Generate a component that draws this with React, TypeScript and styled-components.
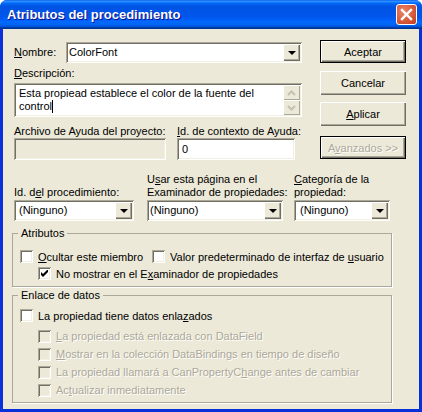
import React from 'react';
import styled, { createGlobalStyle } from 'styled-components';

// ===== Global =====
const GlobalStyle = createGlobalStyle`
  html, body {
    margin: 0;
    padding: 0;
    background: #fff;
  }
`;

const uiFont = `"Liberation Sans", Arial, sans-serif`;
const sunken = `inset 1px 1px 0 #aca899, inset -1px -1px 0 #fff, inset 2px 2px 0 #716f64, inset -2px -2px 0 #f1efe2`;
const raised = `inset 1px 1px 0 #fff, inset -1px -1px 0 #716f64, inset -2px -2px 0 #aca899`;

// ===== Window frame =====
const Window = styled.div`
  width: 422px;
  height: 412px;
  box-sizing: border-box;
  display: flex;
  flex-direction: column;
  background: #0831d9;
  border-radius: 7px 7px 0 0;
  overflow: hidden;
  font-family: ${uiFont};
  font-size: 11px;
  color: #000;
`;
const TitleBar = styled.header`
  height: 29px;
  flex: none;
  display: flex;
  align-items: center;
  justify-content: space-between;
  padding: 0 5px 0 7px;
  background: linear-gradient(180deg, #0058ee 0%, #3593ff 4%, #288eff 6%, #127dff 8%, #036ffc 10%, #0262ee 14%, #0057e5 20%, #0054e3 24%, #0055eb 56%, #005bf5 66%, #026afe 76%, #0062ef 86%, #0052d6 92%, #0040ab 94%, #003092 100%);
`;
const Title = styled.h1`
  margin: 0;
  font-family: ${uiFont};
  font-size: 13px;
  font-weight: 700;
  color: #fff;
  text-shadow: 1px 1px 0 #0f1089;
  white-space: nowrap;
`;
const CloseButton = styled.div`
  width: 21px;
  height: 21px;
  box-sizing: border-box;
  border: 1px solid #fff;
  border-radius: 3px;
  background: radial-gradient(circle at 35% 35%, #e9866b 0%, #d9603f 50%, #c0391c 100%);
  display: flex;
  align-items: center;
  justify-content: center;
`;
const Client = styled.main`
  flex: 1;
  margin: 0 3px 3px;
  padding: 11px 0 0 11px;
  background: #ece9d8;
  display: flex;
  flex-direction: column;
`;

// ===== Top area =====
const TopArea = styled.div`
  display: flex;
  height: 121px;
`;
const LeftColumn = styled.div`
  width: 288px;
  display: flex;
  flex-direction: column;
`;
const ButtonColumn = styled.div`
  margin-left: 18px;
  width: 86px;
  display: flex;
  flex-direction: column;
`;
const NameRow = styled.div`
  display: flex;
  align-items: center;
  height: 21px;
  margin-top: 2px;
`;
const Label = styled.label<{ $width?: number }>`
  display: block;
  line-height: 13px;
  white-space: nowrap;
  ${p => (p.$width ? `width: ${p.$width}px;` : '')}
`;
const Field = styled.div<{ $width?: number; $grey?: boolean; $height?: number }>`
  box-sizing: border-box;
  width: ${p => (p.$width ? `${p.$width}px` : '100%')};
  height: ${p => p.$height ?? 22}px;
  background: ${p => (p.$grey ? '#ece9d8' : '#fff')};
  box-shadow: ${sunken};
  padding: 2px;
  display: flex;
  align-items: center;
  justify-content: space-between;
  line-height: 13px;
`;
const FieldText = styled.span<{ $indent?: number }>`
  padding-left: ${p => p.$indent ?? 3}px;
  white-space: nowrap;
`;
const DropButton = styled.div`
  width: 17px;
  height: 17px;
  flex: none;
  background: #ece9d8;
  box-shadow: ${raised};
  display: flex;
  align-items: center;
  justify-content: center;
  &::after {
    content: '';
    border-left: 4px solid transparent;
    border-right: 4px solid transparent;
    border-top: 4px solid #000;
  }
`;
const DescLabel = styled(Label)`
  margin-top: 4px;
  margin-bottom: 3px;
`;
const DescArea = styled(Field)`
  align-items: stretch;
  padding: 2px 2px 2px 5px;
`;
const DescText = styled.div`
  flex: 1;
  padding-top: 2px;
  line-height: 13px;
`;
const Caret = styled.span`
  display: inline-block;
  width: 1px;
  height: 13px;
  background: #000;
  vertical-align: top;
`;
const ScrollColumn = styled.div`
  width: 17px;
  display: flex;
  flex-direction: column;
  flex: none;
`;
const ScrollButton = styled.div`
  flex: 1;
  background: #ece9d8;
  box-shadow: inset 1px 1px 0 #fff, inset -1px -1px 0 #aca899;
  display: flex;
  align-items: center;
  justify-content: center;
`;
const HelpRow = styled.div`
  display: flex;
  margin-top: 8px;
  gap: 11px;
`;
const HelpCell = styled.div<{ $width: number }>`
  width: ${p => p.$width}px;
  display: flex;
  flex-direction: column;
`;

// ===== Buttons =====
const PushButton = styled.div<{ $isDefault?: boolean; $disabled?: boolean; $top: number }>`
  box-sizing: border-box;
  height: ${p => (p.$isDefault ? 23 : 24)}px;
  margin-top: ${p => p.$top}px;
  background: #ece9d8;
  display: flex;
  align-items: center;
  justify-content: center;
  box-shadow: ${raised};
  ${p => (p.$isDefault ? 'border: 1px solid #000;' : '')}
  ${p => (p.$disabled ? 'color: #aca899; text-shadow: 1px 1px 0 #fff;' : '')}
`;

// ===== Combos row =====
const ComboRow = styled.div`
  display: flex;
  margin-top: 4px;
  height: 56px;
`;
const ComboCell = styled.div<{ $width: number; $gap: number }>`
  width: ${p => p.$width}px;
  margin-right: ${p => p.$gap}px;
  display: flex;
  flex-direction: column;
  justify-content: flex-end;
  gap: 1px;
`;

// ===== Group boxes =====
const Group = styled.fieldset<{ $height: number; $top: number }>`
  box-sizing: border-box;
  width: 380px;
  min-width: 0;
  height: ${p => p.$height}px;
  margin: ${p => p.$top}px 0 0 -2px;
  padding: 0 0 0 7px;
  border: 1px solid #aca899;
  box-shadow: 1px 1px 0 #fff;
  display: flex;
  flex-direction: column;
`;
const GroupTitle = styled.legend`
  margin-left: -2px;
  padding: 0 3px;
  line-height: 13px;
`;
const CheckRow = styled.div<{ $indent?: number; $height?: number; $top?: number }>`
  display: flex;
  align-items: center;
  height: ${p => p.$height ?? 17}px;
  margin-top: ${p => p.$top ?? 0}px;
  padding-left: ${p => p.$indent ?? 0}px;
`;
const CheckItem = styled.div<{ $disabled?: boolean; $width?: number }>`
  display: flex;
  align-items: center;
  gap: 5px;
  ${p => (p.$width ? `width: ${p.$width}px;` : '')}
  white-space: nowrap;
  ${p => (p.$disabled ? 'color: #aca899; text-shadow: 1px 1px 0 #fff;' : '')}
`;
const Box = styled.span<{ $disabled?: boolean }>`
  width: 13px;
  height: 13px;
  flex: none;
  box-sizing: border-box;
  background: ${p => (p.$disabled ? '#ece9d8' : '#fff')};
  box-shadow: ${sunken};
  display: flex;
  align-items: center;
  justify-content: center;
`;
const Check = () => (
  <svg width="7" height="7" viewBox="0 0 7 7">
    <path d="M0 2 L2 4 L6 0 L7 0 L7 2 L2 7 L0 5 Z" fill="#000" />
  </svg>
);
const Checkbox: React.FC<{ checked?: boolean; disabled?: boolean; width?: number; children: React.ReactNode }> = ({ checked, disabled, width, children }) => (
  <CheckItem $disabled={disabled} $width={width}>
    <Box $disabled={disabled}>{checked && <Check />}</Box>
    <span>{children}</span>
  </CheckItem>
);

const Combo: React.FC<{ text: string; width?: number; indent?: number }> = ({ text, width, indent }) => (
  <Field $width={width} $height={21}>
    <FieldText $indent={indent}>{text}</FieldText>
    <DropButton />
  </Field>
);

const Chevron: React.FC<{ up?: boolean }> = ({ up }) => (
  <svg width="9" height="6" viewBox="0 0 9 6">
    <path d={up ? 'M1 5 L4.5 1.5 L8 5' : 'M1 1 L4.5 4.5 L8 1'} fill="none" stroke="#c4c1b4" strokeWidth="2" />
  </svg>
);

// ===== React Component =====
export default function App() {
  return (
    <>
      <GlobalStyle />
      <Window>
        <TitleBar>
          <Title>Atributos del procedimiento</Title>
          <CloseButton>
            <svg width="13" height="13" viewBox="0 0 13 13">
              <path d="M2 2 L11 11 M11 2 L2 11" stroke="#fff" strokeWidth="2.4" strokeLinecap="square" />
            </svg>
          </CloseButton>
        </TitleBar>
        <Client>
          <TopArea>
            <LeftColumn>
              <NameRow>
                <Label $width={52}><u>N</u>ombre:</Label>
                <Combo text="ColorFont" width={236} indent={1} />
              </NameRow>
              <DescLabel><u>D</u>escripción:</DescLabel>
              <DescArea $height={34}>
                <DescText>
                  Esta propiead establece el color de la fuente del<br />
                  control<Caret />
                </DescText>
                <ScrollColumn>
                  <ScrollButton><Chevron up /></ScrollButton>
                  <ScrollButton><Chevron /></ScrollButton>
                </ScrollColumn>
              </DescArea>
              <HelpRow>
                <HelpCell $width={152}>
                  <Label>Archivo de Ayuda del proyecto:</Label>
                  <Field $grey />
                </HelpCell>
                <HelpCell $width={118}>
                  <Label><u>I</u>d. de contexto de Ayuda:</Label>
                  <Field><FieldText>0</FieldText></Field>
                </HelpCell>
              </HelpRow>
            </LeftColumn>
            <ButtonColumn>
              <PushButton $isDefault $top={0}>Aceptar</PushButton>
              <PushButton $top={8}>Cancelar</PushButton>
              <PushButton $top={7}><span><u>A</u>plicar</span></PushButton>
              <PushButton $isDefault $disabled $top={10}><span>A<u>v</u>anzados &gt;&gt;</span></PushButton>
            </ButtonColumn>
          </TopArea>
          <ComboRow>
            <ComboCell $width={120} $gap={13}>
              <Label>Id. d<u>e</u>l procedimiento:</Label>
              <Combo text="(Ninguno)" />
            </ComboCell>
            <ComboCell $width={136} $gap={11}>
              <Label>U<u>s</u>ar esta página en el<br />Examinador de propiedades:</Label>
              <Combo text="(Ninguno)" indent={1} />
            </ComboCell>
            <ComboCell $width={96} $gap={0}>
              <Label><u>C</u>ategoría de la<br />propiedad:</Label>
              <Combo text="(Ninguno)" indent={4} />
            </ComboCell>
          </ComboRow>
          <Group $height={60} $top={6}>
            <GroupTitle>Atributos</GroupTitle>
            <CheckRow $top={8}>
              <Checkbox width={132}><u>O</u>cultar este miembro</Checkbox>
              <Checkbox>Valor predeterminado de interfaz de <u>u</u>suario</Checkbox>
            </CheckRow>
            <CheckRow $indent={18}>
              <Checkbox checked>No mostrar en el E<u>x</u>aminador de propiedades</Checkbox>
            </CheckRow>
          </Group>
          <Group $height={114} $top={2}>
            <GroupTitle>Enlace de datos</GroupTitle>
            <CheckRow $top={2} $height={23}>
              <Checkbox>La propiedad tiene datos enla<u>z</u>ados</Checkbox>
            </CheckRow>
            <CheckRow $indent={18} $height={18}>
              <Checkbox disabled><u>L</u>a propiedad está enlazada con DataField</Checkbox>
            </CheckRow>
            <CheckRow $indent={18} $height={18}>
              <Checkbox disabled><u>M</u>ostrar en la colección DataBindings en tiempo de diseño</Checkbox>
            </CheckRow>
            <CheckRow $indent={18} $height={18}>
              <Checkbox disabled>La propiedad llamará a CanPropertyC<u>h</u>ange antes de cambiar</Checkbox>
            </CheckRow>
            <CheckRow $indent={18} $height={18}>
              <Checkbox disabled>Ac<u>t</u>ualizar inmediatamente</Checkbox>
            </CheckRow>
          </Group>
        </Client>
      </Window>
    </>
  );
}
